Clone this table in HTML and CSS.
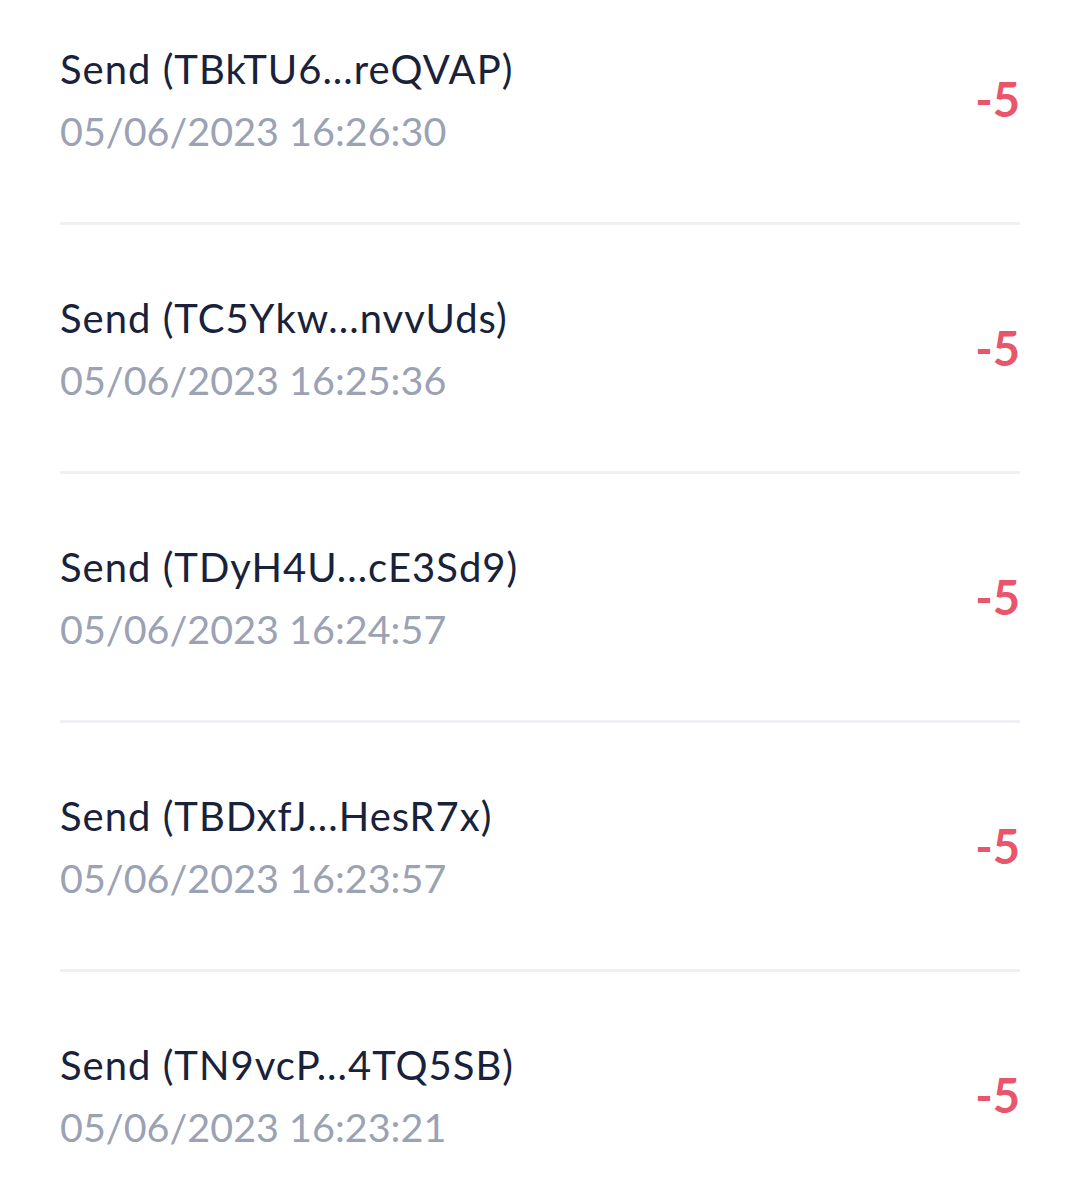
FILE: index.html
```html
<!DOCTYPE html>
<html>
<head>
<meta charset="utf-8">
<link rel="stylesheet" href="styles.css">
</head>
<body>
<ul class="tx-list">
  <li class="tx">
    <div class="tx-info">
      <div class="tx-title">Send (TBkTU6...reQVAP)</div>
      <div class="tx-date">05/06/2023 16:26:30</div>
    </div>
    <div class="tx-amount">-5</div>
  </li>
  <li class="tx">
    <div class="tx-info">
      <div class="tx-title">Send (TC5Ykw...nvvUds)</div>
      <div class="tx-date">05/06/2023 16:25:36</div>
    </div>
    <div class="tx-amount">-5</div>
  </li>
  <li class="tx">
    <div class="tx-info">
      <div class="tx-title">Send (TDyH4U...cE3Sd9)</div>
      <div class="tx-date">05/06/2023 16:24:57</div>
    </div>
    <div class="tx-amount">-5</div>
  </li>
  <li class="tx">
    <div class="tx-info">
      <div class="tx-title">Send (TBDxfJ...HesR7x)</div>
      <div class="tx-date">05/06/2023 16:23:57</div>
    </div>
    <div class="tx-amount">-5</div>
  </li>
  <li class="tx">
    <div class="tx-info">
      <div class="tx-title">Send (TN9vcP...4TQ5SB)</div>
      <div class="tx-date">05/06/2023 16:23:21</div>
    </div>
    <div class="tx-amount">-5</div>
  </li>
</ul>
</body>
</html>
```

FILE: styles.css
```css
html, body {
  margin: 0;
  padding: 0;
  background: #ffffff;
}

body {
  font-family: Lato, "Noto Sans", sans-serif;
  overflow: hidden;
}

.tx-list {
  list-style: none;
  margin: -24px 59px 0 60px;
  padding: 0;
}

.tx {
  height: 246px;
  display: flex;
  align-items: center;
  justify-content: space-between;
  border-bottom: 3px solid #eef0f3;
}

.tx-info {
  display: flex;
  flex-direction: column;
  padding-top: 1px;
}

.tx-title {
  font-size: 40px;
  line-height: 62px;
  letter-spacing: 1px;
  color: #18223a;
}

.tx-date {
  font-size: 39.5px;
  line-height: 61px;
  color: #9aa2b4;
}

.tx-amount {
  font-size: 47px;
  font-weight: 700;
  color: #e8566c;
  line-height: 62px;
}
```
